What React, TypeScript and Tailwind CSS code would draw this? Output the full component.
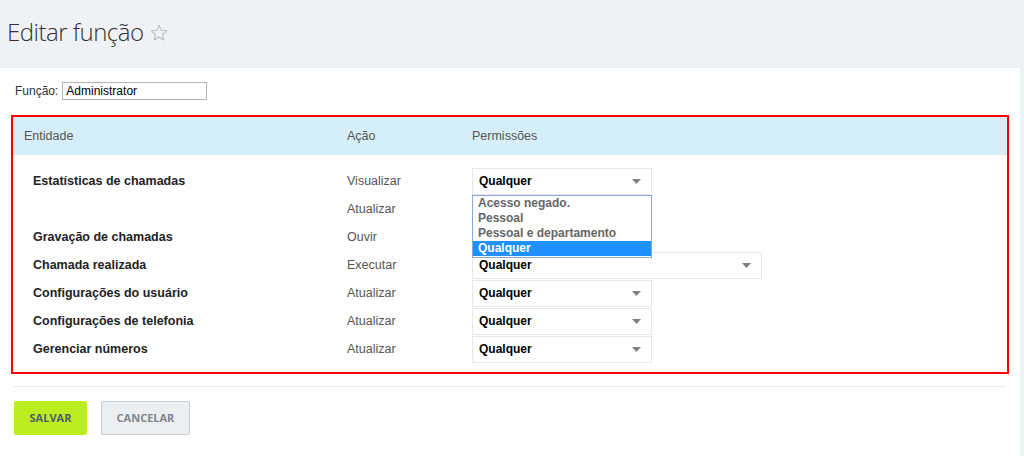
import React from "react";

type Row = {
  entity: string;
  action: string;
  wide?: boolean;
  covered?: boolean;
};

const ROWS: Row[] = [
  { entity: "Estatísticas de chamadas", action: "Visualizar" },
  { entity: "", action: "Atualizar", covered: true },
  { entity: "Gravação de chamadas", action: "Ouvir", covered: true },
  { entity: "Chamada realizada", action: "Executar", wide: true },
  { entity: "Configurações do usuário", action: "Atualizar" },
  { entity: "Configurações de telefonia", action: "Atualizar" },
  { entity: "Gerenciar números", action: "Atualizar" },
];

const OPTIONS = ["Acesso negado.", "Pessoal", "Pessoal e departamento", "Qualquer"];

const Arrow = () => (
  <svg width="9" height="5" viewBox="0 0 9 5" className="shrink-0">
    <path d="M0 0 L9 0 L4.5 5 Z" fill="#7b7f85" />
  </svg>
);

const Star = () => (
  <svg width="18" height="17" viewBox="0 0 24 23" className="mt-[10px]">
    <path
      d="M12 1.5 L14.9 8.6 L22.5 9.2 L16.7 14.2 L18.5 21.6 L12 17.6 L5.5 21.6 L7.3 14.2 L1.5 9.2 L9.1 8.6 Z"
      fill="none"
      stroke="#b9bec4"
      strokeWidth="1.4"
      strokeLinejoin="round"
    />
  </svg>
);

const FakeSelect = ({ wide, covered }: { wide?: boolean; covered?: boolean }) => (
  <div
    className={`flex items-center justify-between h-[27px] pl-[6px] pr-[10px] bg-white border border-[#e6e8ea] ${
      wide ? "w-[290px]" : "w-[180px]"
    } ${covered ? "invisible" : ""}`}
  >
    <span className="text-[12px] font-bold text-black">Qualquer</span>
    <Arrow />
  </div>
);

export default function App() {
  return (
    <div className="min-h-[456px] bg-[#eef2f4] font-['Liberation_Sans',Arial,sans-serif]">
      {/* Title bar */}
      <div className="h-[68px] flex items-start pl-[7px] pt-[14px] gap-[6px]">
        <h1 className="font-['Open_Sans',sans-serif] font-light text-[24px] tracking-[-0.5px] leading-[36px] text-[#333]">
          Editar função
        </h1>
        <Star />
      </div>

      {/* Panel */}
      <div className="bg-white mr-[4px] pb-[21px]">
        <div className="flex items-center pt-[14px] pl-[15px] gap-[4px]">
          <span className="text-[12px] text-[#333]">Função:</span>
          <div className="w-[145px] h-[18px] border border-[#b4b4b4] flex items-center px-[3px] text-[12px] text-black">
            Administrator
          </div>
        </div>

        <div className="mt-[15px] ml-[11px] mr-[11px] border-2 border-[#ff0000] pb-[9px]">
          {/* Header */}
          <div className="flex items-center h-[38px] bg-[#d5eef9] text-[12.5px] text-[#555]">
            <div className="w-[334px] pl-[11px]">Entidade</div>
            <div className="w-[125px]">Ação</div>
            <div>Permissões</div>
          </div>

          <div className="pt-[12px]">
            {ROWS.map((row, i) => (
              <div key={i} className="flex items-center h-[28px]">
                <div className="w-[334px] pl-[20px] text-[12.5px] font-bold text-[#222]">
                  {row.entity}
                </div>
                <div className="w-[125px] text-[12.5px] text-[#555]">{row.action}</div>
                <div className="relative">
                  <FakeSelect wide={row.wide} covered={row.covered} />
                  {i === 0 && (
                    <div className="absolute z-10 left-0 top-[27px] w-[180px] h-[63px] bg-white border border-[#86a9dc] text-[12px] font-bold text-[#666] leading-[15px]">
                      {OPTIONS.map((opt) => (
                        <div
                          key={opt}
                          className={`pl-[5px] h-[15px] ${
                            opt === "Qualquer" ? "bg-[#1e90ff] text-white" : ""
                          }`}
                        >
                          {opt}
                        </div>
                      ))}
                    </div>
                  )}
                </div>
              </div>
            ))}
          </div>
        </div>

        <div className="mx-[14px] mt-[12px] h-[1px] bg-[#e8eaeb]" />

        <div className="flex gap-[14px] pl-[14px] mt-[14px] font-['Open_Sans',sans-serif] font-bold text-[11px] text-[#535c69]">
          <button className="w-[73px] h-[34px] rounded-[2px] bg-[#bbed21]">SALVAR</button>
          <button className="w-[89px] h-[34px] rounded-[2px] bg-[#eceef0] border border-[#c6cdd3] text-[#80868e]">
            CANCELAR
          </button>
        </div>
      </div>
    </div>
  );
}
